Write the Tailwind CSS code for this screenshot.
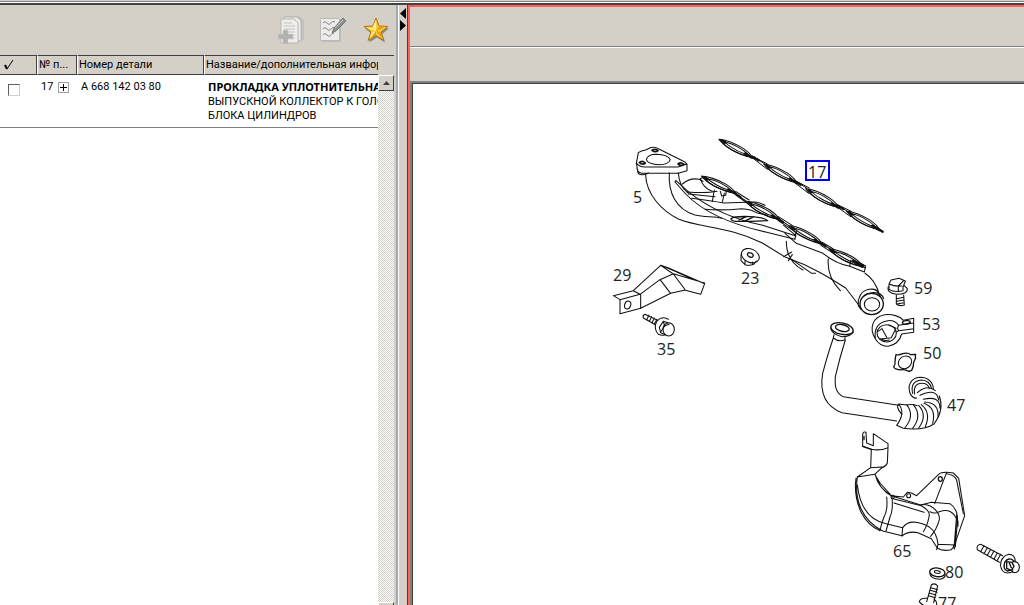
<!DOCTYPE html>
<html lang="ru">
<head>
    <meta charset="UTF-8">
    <meta name="viewport" content="width=device-width, initial-scale=1.0">
    <title>Каталог деталей</title>
    <script src="https://cdn.jsdelivr.net/npm/@tailwindcss/browser@4"></script>
</head>
<body class="h-screen overflow-hidden flex flex-col bg-[#d4d0c8] text-black text-[11px] leading-[14px] font-[Roboto,'DejaVu_Sans_Condensed',sans-serif]">
    <div class="h-[5px] shrink-0 border-b-2 border-[#404448] bg-[#d4d0c8]">
        <div class="h-[2px] border-b border-[#808080]"></div>
        <div class="h-px bg-white"></div>
    </div>

    <div class="flex-1 min-h-0 flex">
        <!-- Parts list -->
        <section class="w-[396px] shrink-0 flex flex-col pr-[2px]">
            <div class="h-[50px] shrink-0 flex items-center justify-end gap-4 pr-1">
                <button type="button" disabled aria-label="Добавить в список">
                    <svg class="w-[26px] h-[30px]" viewBox="0 0 26 30">
                        <path d="M8 1h13l5 4v20H8z" fill="#c4c2be"/>
                        <path d="M6 2h13l4 4v20H6z" fill="#eceae6" stroke="#b4b2ae"/>
                        <path d="M3 4h13l4 4v20H3z" fill="#efeeeb" stroke="#b8b6b2"/>
                        <path d="M6 8h8M6 11h11M6 14h11M6 17h11M9 20h8M12 23h5" stroke="#c4c2be"/>
                        <path d="M5 15h5v4h5v5h-5v5H5v-5H0v-5h5z" fill="#b0b0b0" stroke="#d4d2ce" stroke-width=".6"/>
                    </svg>
                </button>
                <button type="button" disabled aria-label="Заметки">
                    <svg class="w-[27px] h-[26px]" viewBox="0 0 27 26">
                        <path d="M2 3h19v22H2z" fill="#bdbbb7"/>
                        <path d="M.5 1.500h19v22H.5z" fill="#edecea" stroke="#bbb9b5"/>
                        <path d="M3 6q2-3 4 0t4 0t4-1M3 12q2-3 4 0t4 0t4-1M3 18q2-3 4 0t4 0t3-1" fill="none" stroke="#888"/>
                        <path d="M12 16l2-5L23 1l3 3L16 14z" fill="#8e8e8e" stroke="#777"/>
                        <path d="M15 11l8-8" stroke="#c8c8c8"/>
                    </svg>
                </button>
                <button type="button" aria-label="Избранное">
                    <svg class="w-[27px] h-[26px]" viewBox="0 0 27 26">
                        <path d="M14 3l3 8 9 .5-7 5.500 3 8.500-8-5-8 5 3-8.500-7-5.500 9-.5z" fill="#8a8780"/>
                        <path d="M13 1l3 8 9 .5-7 5.500 3 8.500-8-5-8 5 3-8.500-7-5.500 9-.5z" fill="#fcc932" stroke="#b07410"/>
                        <path d="M13 3l0 11-3-4.500zM3 10.500l7 .5 3 3zM6.500 21.500l2.500-6 4-1.500z" fill="#fff3a8"/>
                        <path d="M13 14l8-3.500-5-.5zM13 14l6.500 7.500-2-6zM13 14v4l-5 3z" fill="#e59a12"/>
                    </svg>
                </button>
            </div>

            <div class="flex-1 min-h-0 flex bg-white">
                <div class="flex-1 min-w-0 overflow-hidden">
                    <table class="table-fixed w-full border-separate border-spacing-0">
                        <colgroup>
                            <col class="w-[37px]">
                            <col class="w-10">
                            <col class="w-[127px]">
                            <col>
                        </colgroup>
                        <thead>
                            <tr class="h-5 text-left bg-[#d4d0c8]">
                                <th class="font-normal p-0 pl-1 border-y border-[#404040] border-r">
                                    <svg class="w-3 h-3" viewBox="0 0 12 12" role="img" aria-label="Выбор"><path d="M1 6l2 4L9 1" fill="none" stroke="#000"/><path d="M1 6l2 4" stroke="#000" stroke-width="2"/></svg>
                                </th>
                                <th class="font-normal p-0 pl-px border-y border-[#404040] border-r border-l border-l-white whitespace-nowrap">№ п...</th>
                                <th class="font-normal p-0 pl-px border-y border-[#404040] border-r border-l border-l-white whitespace-nowrap">Номер детали</th>
                                <th class="font-normal p-0 pl-px border-y border-[#404040] border-l border-l-white whitespace-nowrap">Название/дополнительная инфор</th>
                            </tr>
                        </thead>
                        <tbody>
                            <tr class="align-top">
                                <td class="p-0 pt-[9px] pl-2 border-b border-[#808080]">
                                    <input type="checkbox" aria-label="Выбрать позицию 17" class="block appearance-none size-3 bg-white border border-[#d4d0c8] border-t-[#606060] border-l-[#606060]">
                                </td>
                                <td class="p-0 pt-[5px] pl-1 border-b border-[#808080]">
                                    <div class="flex items-center gap-[5px]">
                                        <span>17</span>
                                        <button type="button" aria-label="Развернуть" class="size-[11px] shrink-0 border border-[#a0a0a0]">
                                            <svg class="size-[9px]" viewBox="0 0 9 9"><path d="M1 4.500h7M4.500 1v7" stroke="#000"/></svg>
                                        </button>
                                    </div>
                                </td>
                                <td class="p-0 pt-[5px] pl-1 border-b border-[#808080]">A 668 142 03 80</td>
                                <td class="p-0 pt-[5px] pb-1 pl-1 border-b border-[#808080] whitespace-nowrap">
                                    <b class="font-['Noto_Sans',sans-serif]">ПРОКЛАДКА УПЛОТНИТЕЛЬНА</b><br>ВЫПУСКНОЙ КОЛЛЕКТОР К ГОЛО<br>БЛОКА ЦИЛИНДРОВ
                                </td>
                            </tr>
                        </tbody>
                    </table>
                </div>
                <!-- Scrollbar -->
                <div class="w-4 shrink-0 flex flex-col">
                    <div class="h-5 shrink-0 bg-[#d4d0c8] border-t border-[#404040]"></div>
                    <button type="button" aria-label="Вверх" class="h-4 shrink-0 flex items-center justify-center bg-[#d4d0c8] border border-t-white border-l-white border-r-[#404040] border-b-[#404040]">
                        <svg class="w-[7px] h-1" viewBox="0 0 7 4"><path d="M0 4L3.500 0 7 4z" fill="#404040"/></svg>
                    </button>
                    <div class="flex-1 bg-[repeating-conic-gradient(#d4d0c8_0_25%,#fff_0_50%)] bg-size-[2px_2px]"></div>
                    <div class="h-[3px] shrink-0 bg-[#d4d0c8] border border-b-0 border-t-white border-l-white border-r-[#404040]"></div>
                </div>
            </div>
        </section>

        <!-- Splitter -->
        <div class="w-3 shrink-0 border-l-2 border-[#a4a8ac] border-r border-r-[#404040]">
            <div class="h-full border-l border-white flex flex-col items-center">
                <button type="button" aria-label="Свернуть влево"><svg class="w-[6px] h-[26px]" viewBox="0 0 6 26"><path d="M6 3v11L0 8.500zM0 15v11l6-5.500z"/></svg></button>
            </div>
        </div>

        <!-- Drawing -->
        <main class="flex-1 min-w-0 flex flex-col border-l-2 border-t-2 border-[#ff6058]">
            <div class="h-10 shrink-0 border-b border-[#808080]"></div>
            <div class="h-[34px] shrink-0 border-t border-white"></div>
            <div class="flex-1 min-h-0 overflow-hidden bg-white border-t-2 border-l-2 border-[#808080]">
                <div class="h-full overflow-hidden border-t border-l border-[#404040]">
                    <svg class="w-[611px] h-[521px] max-w-none" viewBox="413 84 611 521" fill="none" stroke="#111" stroke-linejoin="round" stroke-linecap="round">
                        <defs>
                            <g id="port">
                                <path d="M-56-1q28-12 76-9 26 3 38 12-28 10-66 8-30-2-48-11z"/>
                                <path d="M-36-1q16-6 42-5 24 1 36 6-16 6-44 4-22-1-34-5z"/>
                                <path d="M-40 4q30 11 84 2"/>
                                <path d="M34 2l24 1M-46-1l10 1" stroke-width="8"/>
                            </g>
                        </defs>
                        <!-- 17: gasket -->
                        <g transform="translate(700 130) scale(.33333)" stroke-width="3">
                            <use href="#port" transform="translate(106 54) rotate(27)"/>
                            <use href="#port" transform="translate(240 129) rotate(28)"/>
                            <use href="#port" transform="translate(366 203) rotate(28)"/>
                            <use href="#port" transform="translate(488 270) rotate(28)"/>
                            <path d="M158 78l36 24M158 84l44 34M156 78l46 24M284 152l36 22M282 150l46 24M284 158l42 32M408 224l38 22M408 222l46 22M410 230l42 30M524 288l24 16"/>
                            <path d="M62 30l14 6M160 82l16 9M288 156l14 8M414 228l16 9M530 294l18 11" stroke-width="7"/>
                        </g>
                        <!-- 5: exhaust manifold -->
                        <g transform="translate(625 130) scale(.33333)" stroke-width="3.200">
                            <path d="M34 100l6-32q8-6 22-8l14-7q14-4 24 3l80 40 6 8v18l-26 8H50q-16-4-14-22zM35 100q8 10 24 11h100l27-9M38 124q0 10 14 10 16 0 18-6"/>
                            <path d="M64 89q4-16 30-16 36 2 42 16-6 15-32 15-36-1-40-15z"/>
                            <path d="M81 61q10-6 18 1-8 7-18-1zM43 98q8-8 18 1-8 7-18-1zM159 102q8-7 18 1-8 7-18-1z" stroke-width="5"/>
                            <path d="M62 135c2 60 50 108 98 132 70 28 150 22 252 72l70 43c80 28 130 60 180 92l46 60"/>
                            <path d="M133 128c-4 60 20 110 77 127 30 8 60 2 80 10M160 128c2 26 8 44 30 62"/>
                            <path d="M150 156l32 36c60 62 150 94 240 114l88 22M153 152l40 36c70 54 150 84 220 98l100 32M150 156l3-5M510 328l2-14 2-12M512 316l-36-30"/>
                            <path d="M172 162q24-20 50-14l12 6M186 186q60 4 90-2M190 192l80 8M200 205q60 8 96 14l94-3q16 2 30 10M240 238q50 4 110-2 30 2 44 12l34 8"/>
                            <path d="M262 214l6-34M292 216l6-26M286 184l4 14 12-2 2-14"/>
                            <path d="M318 266q10-8 58-6 40 2 52 12-50 2-96 2-14-2-14-8zM342 270l22-10M362 272l26-12" stroke-width="4"/>
                            <path d="M226 146l10-5M226 146q8 28 36 38M514 340l80 30q40 32 78 38l46 18 4-18-24-12M480 310l34 30"/>
                            <use href="#port" transform="translate(280 163) rotate(25)"/>
                            <use href="#port" transform="translate(412 240) rotate(27)"/>
                            <use href="#port" transform="translate(540 313) rotate(27)"/>
                            <use href="#port" transform="translate(662 382) rotate(26)"/>
                            <path d="M330 190l32 22M332 184l40 26M334 196l36 26M458 264l32 22M460 260l42 26M460 272l40 26M586 338l34 22M590 336l34 20M588 346l34 22M710 404l10 10"/>
                            <path d="M332 192l14 9M460 268l14 9M588 340l14 9M684 392l30 14" stroke-width="7"/>
                            <path d="M484 334q0 60 50 86M476 380l24-14M490 392l12-18M500 388l60 42h12M610 386c-4 40 10 70 36 96M674 408l4-18M720 430q30 18 44 66"/>
                            <path d="M702 506q6-24 30-28t30 14M706 520q4-30 34-32t36 18M700 508v20l8 10M762 492l8 18"/>
                            <ellipse cx="740" cy="522" rx="35" ry="32" fill="#fff" stroke-width="4"/>
                            <ellipse cx="741" cy="523" rx="23" ry="20"/>
                        </g>
                        <!-- 23: nut, 59: bolt -->
                        <g transform="translate(730 210) scale(.33333)" stroke-width="3.200">
                            <ellipse cx="61" cy="137" rx="28" ry="20" transform="rotate(25 61 137)"/>
                            <ellipse cx="61" cy="135" rx="9" ry="6" transform="rotate(25 61 135)" stroke-width="4"/>
                            <path d="M33 134v18l12 12q14 4 26-1l8-10M45 164v-12M68 162v-6"/>
                            <path d="M477 222l6-12 24-5 19 8-6 16M477 222v16q16 10 42 4v-13M477 222q16 8 38 6M505 242v-14l16-16"/>
                            <path d="M475 230q-6 18 24 23 34 0 33-17l-10-10M499 256v26q8 8 24 3l-2-30M500 266l22-4M500 274l22-4M500 282l22-4"/>
                        </g>
                        <!-- 29: bracket, 35: bolt -->
                        <g transform="translate(600 250) scale(.33333)" stroke-width="3.200">
                            <path d="M40 137l60-15 20 11-60 16zM60 149v42l62-16v-42M100 122l82-76 22 7 110 48-12 32-46-12M120 133l60-44 40-18 94 28M122 175l90-45 44-10M180 89l32 41M220 72l36 48M182 46l38 26M190 49l90 38 30 12M230 66l54 24"/>
                            <ellipse cx="83" cy="165" rx="9" ry="12" transform="rotate(20 83 165)"/>
                            <path d="M135 193l35 16M130 204l36 20M135 193q-8 4-5 11M147 195l-7 15M155 200l-7 14M163 204l-7 14M171 208l-8 14"/>
                            <path d="M206 208q-20-12-36 6-10 22 4 38 12 6 20 3"/>
                            <path d="M204 218l-14-4-12 18 4 16 14 6M190 214l4 14-12 18M194 228l14-6"/>
                            <ellipse cx="206" cy="238" rx="17" ry="20"/>
                        </g>
                        <!-- 53, 50, 47 -->
                        <g transform="translate(810 270) scale(.33333)" stroke-width="3.200">
                            <path d="M196 206c-20-30-8-66 28-72 26-2 48 6 56 17l31-6v42l-36 5q-8 30-40 37-26 0-39-23zM196 206c-4-32 10-50 38-54 16-2 26 6 32 14l45-7M266 182l45-6M266 166q-6 10 0 16l-6 4"/>
                            <ellipse cx="230" cy="190" rx="29" ry="26"/>
                            <path d="M236 165l22 10-14 28-34 4M204 184l12-8 14 26M210 206q14 8 28 4"/>
                            <ellipse cx="289" cy="157" rx="12" ry="5" transform="rotate(-8 289 157)" stroke-width="4"/>
                            <path d="M258 254q10 2 20-3 16-4 24 3l15-1q-2 8 0 10l-6 14q0 14-6 24l-8 3q-12-6-20-5-10 2-18-2-4 0-8-6 6-8 4-14 0-12 3-23z" stroke-width="4"/>
                            <ellipse cx="285" cy="277" rx="21" ry="18" transform="rotate(-35 285 277)"/>
                            <ellipse cx="96" cy="176" rx="34" ry="17" transform="rotate(12 96 176)" stroke-width="4"/>
                            <ellipse cx="97" cy="174" rx="21" ry="10" transform="rotate(12 97 174)" stroke-width="4"/>
                            <path d="M62 176q6 18 34 24 26 0 34-14M72 194l-2 10q14 12 34 6l2-10"/>
                            <path d="M70 204Q54 250 38 310c-10 60 10 100 58 118l164 25M106 210Q90 260 76 320c-2 30 2 50 24 60l166 26"/>
                            <path d="M266 402q22 26-6 64M266 402q-10 6 8 30M260 466l20 9q60 8 92-13c20-26 26-56 16-84M266 402l24 3q16-4 32 2"/>
                            <path d="M290 404q26 34-6 70M310 404q28 34-2 71M326 406q28 30 0 68M334 404q30 24 12 66M342 400q38 14 26 60M344 396q44 2 40 46M340 388q50-12 50 26M330 376q50-24 56 14M322 368q30-26 54-6"/>
                            <path d="M302 374c-12-26 0-50 28-52 26 0 40 16 40 36M308 370c-6-24 4-38 26-40 18 0 28 12 30 24M314 372c-4-20 4-32 22-32 14 0 20 8 22 16M302 374q8 12 18 10"/>
                        </g>
                        <!-- 65: heat shield, 80: washer, 77: bolt -->
                        <g transform="translate(840 425) scale(.33333)" stroke-width="3.200">
                            <path d="M68 64V28q2-10 10-6l2 32 20 8V26l44 30v12q-24 10-50 5zM94 73l-2 55M144 68l-2 46q-4 10-16 14l-22 20-52 8 40-28 34-2"/>
                            <path d="M72 34v10M68 64l26 9" stroke-width="4"/>
                            <path d="M52 156c-10 70 14 130 76 162l58 14 2-24-50-12C90 286 60 250 52 180M48 160l-2 20c0 60 24 116 74 137"/>
                            <path d="M104 148l16 26 34 38 36 4 12-14 12 2 16 8 66-64q10-10 44-4l16 16 18 112-32 92-8 10q-28 6-42-5l-18-28-40-18q-30-6-48 10M106 150q10 40 50 64M154 212l88 28 32-8 56 4q20 14 22 38l2 30"/>
                            <path d="M140 216q4 40-8 60-8 20-12 40M156 216q4 40-6 60l-12 42M162 234l90 28M162 222l82 20q24 14 24 28-4 28-18 50M242 240q16-4 30 4 28 16 26 40-8 30-26 50M284 236l36-94M270 260q14 8 28 0 40-14 54 28l-6 78M320 146q26 4 30 20l20 100M350 270l-8 100M354 290l-10 60M188 308q14-20 40-16 30 6 42 16 20 14 24 50l52 2M294 358l-4 16M340 360l4 12"/>
                            <ellipse cx="301" cy="162" rx="6" ry="7" stroke-width="4"/>
                            <ellipse cx="206" cy="212" rx="6" ry="6"/>
                            <ellipse cx="158" cy="216" rx="5" ry="5"/>
                            <ellipse cx="292" cy="442" rx="23" ry="13" transform="rotate(8 292 442)" stroke-width="4"/>
                            <ellipse cx="292" cy="441" rx="9" ry="4" transform="rotate(8 292 441)"/>
                            <path d="M269 444q2 18 30 19 16-2 17-14"/>
                            <path d="M274 480q10-8 19 3l-12 50M274 480l-14 50M273 488l20 6M271 496l20 6M268 504l20 6M266 512l20 6M262 520q-22-2-24 10 8 12 24 14M282 522q12 10 6 22"/>
                            <path d="M422 358l66 34M412 374l66 38M422 358q-14 2-10 16M432 362l-10 18M442 368l-10 18M452 373l-10 18M462 378l-10 18M472 384l-10 18M482 388l-10 18"/>
                            <path d="M526 408q-2-20-20-20-22 6-25 32 4 24 22 24 10 0 16-6"/>
                            <path d="M522 408q-16-14-28 4-6 20 8 26l16-4M500 410l16 2 6 12-8 12-14-6zM508 414l6 14" stroke-width="4"/>
                            <path d="M518 410q20-2 20 18-2 18-20 14"/>
                        </g>
                        <rect x="806" y="161" width="23" height="19" stroke="#0000f0" stroke-width="2" stroke-linejoin="miter"/>
                        <g class="text-base font-['Open_Sans','Noto_Sans',sans-serif]" fill="#222" stroke="none">
                            <text x="808" y="178">17</text>
                            <text x="633" y="203">5</text>
                            <text x="741" y="284">23</text>
                            <text x="613" y="281">29</text>
                            <text x="657" y="355">35</text>
                            <text x="914" y="294">59</text>
                            <text x="922" y="330">53</text>
                            <text x="923" y="359">50</text>
                            <text x="947" y="411">47</text>
                            <text x="893" y="557">65</text>
                            <text x="945" y="578">80</text>
                            <text x="938" y="609">77</text>
                        </g>
                    </svg>
                </div>
            </div>
        </main>
    </div>
</body>
</html>
